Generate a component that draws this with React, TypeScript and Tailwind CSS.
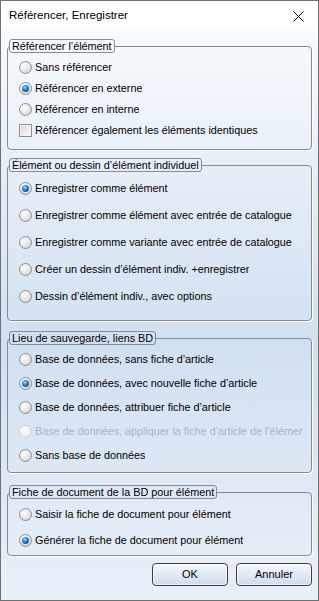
type Item = { label: string; checked?: boolean; disabled?: boolean; box?: boolean };

function Radio({ checked, disabled }: { checked?: boolean; disabled?: boolean }) {
  if (disabled) {
    return (
      <span className="flex h-[13px] w-[13px] shrink-0 rounded-full border border-[#c9cfd6] bg-[radial-gradient(circle_at_35%_30%,#ffffff,#e9edf2_75%)]" />
    );
  }
  return (
    <span className="flex h-[13px] w-[13px] shrink-0 items-center justify-center rounded-full border border-[#8b8d8f] bg-[radial-gradient(circle_at_35%_30%,#ffffff,#e2e2e2_60%,#c9c9c9)]">
      {checked && (
        <span className="h-[7px] w-[7px] rounded-full bg-[radial-gradient(circle_at_40%_35%,#9ad6ff,#2277c7_45%,#0a356c)]" />
      )}
    </span>
  );
}

function Check() {
  return (
    <span className="flex h-[13px] w-[13px] shrink-0 border border-[#8b8d8f] bg-gradient-to-br from-[#d8d8d8] to-[#fbfbfb] shadow-[inset_0_0_0_1px_#f4f4f4]" />
  );
}

function Group({
  title,
  items,
  rowH,
  pt,
  pb,
  mt,
}: {
  title: string;
  items: Item[];
  rowH: string;
  pt: string;
  pb: string;
  mt: string;
}) {
  return (
    <fieldset
      className={`${mt} min-w-0 rounded-[4px] border border-[#868b91] shadow-[1px_1px_0_#ffffff] ${pt} ${pb}`}
    >
      <legend className="ml-[1px] rounded-[3px] border border-[#868b91] px-[2px] text-[10.8px] leading-[12px] text-black">
        {title}
      </legend>
      {items.map((it) => (
        <div key={it.label} className={`flex ${rowH} items-center gap-[3px] pl-[11px] pr-[8px]`}>
          {it.box ? <Check /> : <Radio checked={it.checked} disabled={it.disabled} />}
          <span
            className={`min-w-0 overflow-hidden whitespace-nowrap text-[10.8px] ${
              it.disabled ? "text-[#aeb4bc]" : "text-black"
            }`}
          >
            {it.label}
          </span>
        </div>
      ))}
    </fieldset>
  );
}

export default function App() {
  return (
    <div
      className="flex h-[601px] w-[319px] flex-col border border-[#707070] bg-white"
      style={{ fontFamily: '"Liberation Sans", Arial, sans-serif' }}
    >
      {/* Title bar */}
      <div className="flex h-[30px] items-center justify-between bg-white pl-[8px] pr-[14px]">
        <span className="text-[11.5px] text-black">Référencer, Enregistrer</span>
        <svg width="11" height="11" viewBox="0 0 11 11">
          <path d="M0.5 0.5 L10.5 10.5 M10.5 0.5 L0.5 10.5" stroke="#000" strokeWidth="1" />
        </svg>
      </div>

      {/* Client area */}
      <div className="flex flex-1 flex-col bg-gradient-to-b from-[#f7fafd] via-[#d1e0f0] via-55% to-[#eaf0f9] px-[6px] pt-[8px]">
        <Group
          title="Référencer l’élément"
          rowH="h-[21px]"
          pt="pt-[4px]"
          pb="pb-[8px]"
          mt="mt-0"
          items={[
            { label: "Sans référencer" },
            { label: "Référencer en externe", checked: true },
            { label: "Référencer en interne" },
            { label: "Référencer également les éléments identiques", box: true },
          ]}
        />
        <Group
          title="Élément ou dessin d’élément individuel"
          rowH="h-[27px]"
          pt="pt-[3px]"
          pb="pb-[10px]"
          mt="mt-[8px]"
          items={[
            { label: "Enregistrer comme élément", checked: true },
            { label: "Enregistrer comme élément avec entrée de catalogue" },
            { label: "Enregistrer comme variante avec entrée de catalogue" },
            { label: "Créer un dessin d’élément indiv. +enregistrer" },
            { label: "Dessin d’élément indiv., avec options" },
          ]}
        />
        <Group
          title="Lieu de sauvegarde, liens BD"
          rowH="h-[24px]"
          pt="pt-[2px]"
          pb="pb-[5px]"
          mt="mt-[10px]"
          items={[
            { label: "Base de données, sans fiche d’article" },
            { label: "Base de données, avec nouvelle fiche d’article", checked: true },
            { label: "Base de données, attribuer fiche d’article" },
            { label: "Base de données, appliquer la fiche d’article de l’élément", disabled: true },
            { label: "Sans base de données" },
          ]}
        />
        <Group
          title="Fiche de document de la BD pour élément"
          rowH="h-[26px]"
          pt="pt-[2px]"
          pb="pb-[2px]"
          mt="mt-[12px]"
          items={[
            { label: "Saisir la fiche de document pour élément" },
            { label: "Générer la fiche de document pour élément", checked: true },
          ]}
        />

        {/* Buttons */}
        <div className="mt-[7px] flex justify-end gap-[8px]">
          <button className="h-[23px] w-[76px] rounded-[4px] border border-[#3c3c3c] bg-gradient-to-b from-[#f4f8fc] to-[#cfdcec] text-[11px] text-black shadow-[inset_0_0_0_1px_#ffffffaa]">
            OK
          </button>
          <button className="h-[23px] w-[76px] rounded-[4px] border border-[#3c3c3c] bg-gradient-to-b from-[#f4f8fc] to-[#cfdcec] text-[11px] text-black shadow-[inset_0_0_0_1px_#ffffffaa]">
            Annuler
          </button>
        </div>
      </div>
    </div>
  );
}
